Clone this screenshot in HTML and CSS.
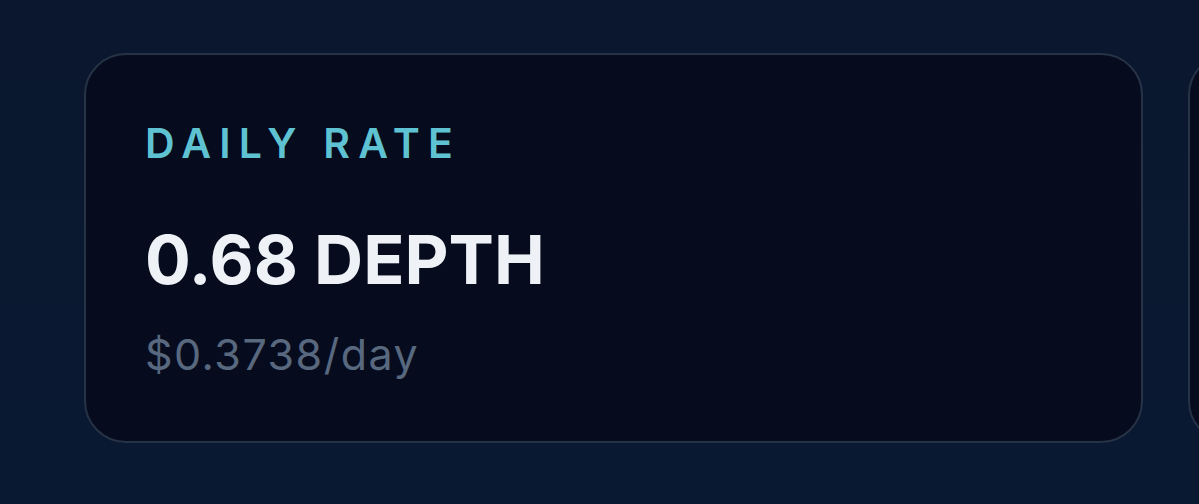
FILE: index.html
```html
<!DOCTYPE html>
<html>
<head>
<meta charset="utf-8">
<link rel="stylesheet" href="styles.css">
</head>
<body>
<div class="row">
  <div class="card">
    <div class="label">DAILY RATE</div>
    <div class="value">0.68 DEPTH</div>
    <div class="sub">$0.3738/day</div>
  </div>
  <div class="card"></div>
</div>
</body>
</html>
```
FILE: styles.css
```css
html, body {
  margin: 0;
  padding: 0;
}
body {
  width: 1199px;
  height: 504px;
  overflow: hidden;
  background: linear-gradient(180deg, #0a172e 0%, #0a1932 100%);
  font-family: Inter, "Noto Sans", sans-serif;
}
.row {
  display: flex;
  gap: 45px;
  padding: 53px 0 0 84px;
}
.card {
  flex: 0 0 1059px;
  height: 390px;
  box-sizing: border-box;
  border: 2px solid #263246;
  border-radius: 42px;
  background: #060c1e;
  padding: 68px 0 0 59px;
}
.label {
  font-size: 41px;
  line-height: 1;
  font-weight: 600;
  letter-spacing: 0.2em;
  color: #5fc2d2;
}
.value {
  margin-top: 61px;
  font-size: 68px;
  line-height: 1;
  font-weight: 700;
  color: #eef2f7;
}
.sub {
  margin-top: 40px;
  font-size: 43px;
  line-height: 1;
  font-weight: 400;
  letter-spacing: 1.5px;
  color: #58687f;
}
```
